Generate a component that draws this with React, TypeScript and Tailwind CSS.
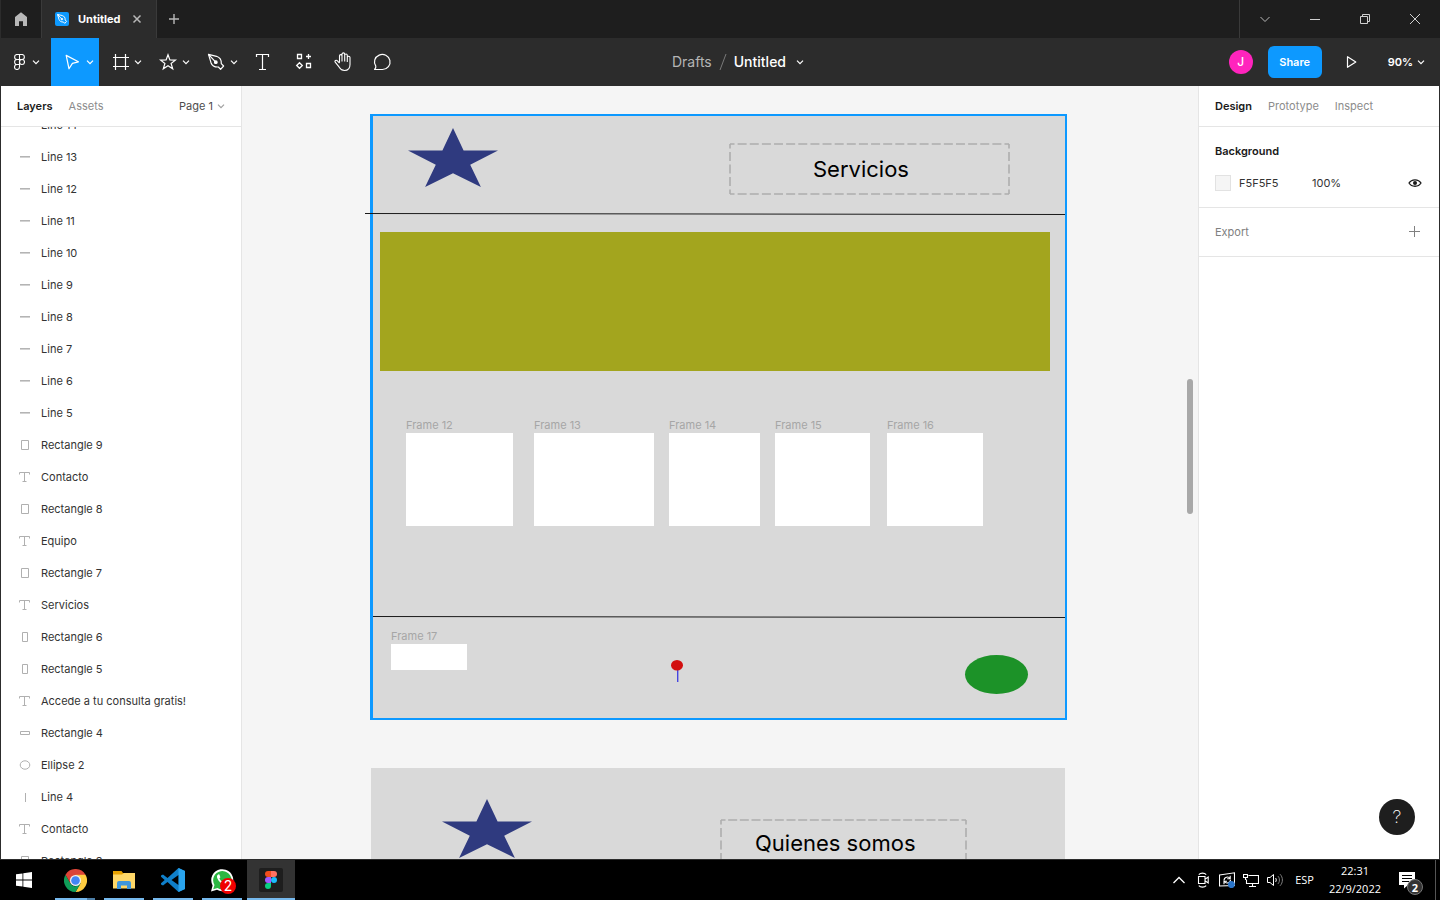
import React from "react";

type IconProps = { children: React.ReactNode; size?: string; box?: string; className?: string };

function Icon({ children, size = "size-6", box = "0 0 24 24", className = "" }: IconProps) {
  return (
    <svg viewBox={box} className={`${size} shrink-0 ${className}`} fill="none" stroke="currentColor" strokeWidth="1" aria-hidden="true">
      {children}
    </svg>
  );
}

function Chevron({ className = "" }: { className?: string }) {
  return (
    <Icon size="size-2" box="0 0 8 8" className={className}>
      <path d="M1 2.6 4 5.6 7 2.6" strokeWidth="1.2" />
    </Icon>
  );
}

const penPath = (
  <>
    <path d="M3.5 4.4 11.5 6.3C14.6 7.3 16.5 9.6 16.3 13.6L18.6 16 15.6 19.3 13.4 17C9.5 17.2 7 15.6 6 12.7Z" strokeLinejoin="round" />
    <path d="M3.7 4.6 10.2 11.6" />
    <circle cx="10.8" cy="12.2" r="1.3" fill="currentColor" />
  </>
);

function TitleBar() {
  return (
    <header className="flex h-[38px] shrink-0 bg-[#1e1e1e] text-[#b8b8b8]">
      <button aria-label="Home" className="flex w-10 items-center justify-center">
        <svg viewBox="0 0 14 14" className="size-3.5" fill="currentColor" aria-hidden="true">
          <path d="M7 0.3 13 5V14H9V9.2H5V14H1V5Z" />
        </svg>
      </button>
      <div className="flex w-[116px] items-center border-x border-[#3a3a3a] bg-[#2c2c2c] pl-[13px]">
        <span className="flex size-3.5 items-center justify-center rounded-[2px] bg-[#0d99ff] text-white">
          <Icon size="size-3" box="1 2 20 20">
            <g strokeWidth="1.6">{penPath}</g>
          </Icon>
        </span>
        <span className="ml-[9px] text-[11px] font-bold text-white">Untitled</span>
        <button aria-label="Close tab" className="ml-3">
          <Icon size="size-2.5" box="0 0 10 10">
            <path d="M1.5 1.5 8.5 8.5M8.5 1.5 1.5 8.5" strokeWidth="1.5" />
          </Icon>
        </button>
      </div>
      <button aria-label="New tab" className="flex w-[34px] items-center justify-center">
        <Icon size="size-2.5" box="0 0 10 10">
          <path d="M5 0V10M0 5H10" strokeWidth="1.4" />
        </Icon>
      </button>
      <div className="ml-auto flex border-l border-[#3a3a3a]">
        <button aria-label="Tabs menu" className="flex w-[50px] items-center justify-center">
          <Icon size="size-3" box="0 0 12 12">
            <path d="M1.5 4 6 8.5 10.5 4" />
          </Icon>
        </button>
        <button aria-label="Minimize" className="flex w-[50px] items-center justify-center text-[#d0d0d0]">
          <Icon size="size-3" box="0 0 12 12">
            <path d="M1 6.5H11" />
          </Icon>
        </button>
        <button aria-label="Restore" className="flex w-[50px] items-center justify-center text-[#d0d0d0]">
          <Icon size="size-3" box="0 0 12 12">
            <path d="M1.5 3.5H8.5V10.5H1.5ZM3.5 3.5V1.5H10.5V8.5H8.5" />
          </Icon>
        </button>
        <button aria-label="Close" className="flex w-[50px] items-center justify-center text-[#d0d0d0]">
          <Icon size="size-3" box="0 0 12 12">
            <path d="M1 1 11 11M11 1 1 11" />
          </Icon>
        </button>
      </div>
    </header>
  );
}

const menuTools = [
  {
    name: "Move",
    active: true,
    icon: <path d="M5.2 5.4 17.4 11.8 11.4 13.4 8 18.8Z" strokeLinejoin="round" strokeWidth="1.2" />,
  },
  { name: "Frame", active: false, icon: <path d="M6.5 4V20M16.5 4V20M4 7.5H20M4 16.5H20" strokeWidth="1.2" /> },
  {
    name: "Shape",
    active: false,
    icon: <path d="M11 4.8 12.9 9.9 18.4 10.1 14.1 13.5 15.7 18.8 11 15.7 6.3 18.8 7.9 13.5 3.6 10.1 9.1 9.9Z" strokeWidth="1.2" />,
  },
  { name: "Pen", active: false, icon: <g strokeWidth="1.2">{penPath}</g> },
];

const plainTools = [
  { name: "Text", icon: <path d="M5.5 7V4.5H17.5V7M11.5 4.5V19.5M8 19.5H15" strokeWidth="1.2" /> },
  {
    name: "Resources",
    icon: <path d="M6.5 4.5H10.5V8.5H6.5ZM15.5 13.5H19.5V17.5H15.5ZM17.5 4V9M15 6.5H20M8.5 12.7 11.3 15.5 8.5 18.3 5.7 15.5Z" strokeWidth="1.3" />,
  },
  {
    name: "Hand",
    icon: (
      <path
        d="M8.5 12.5V5.8C8.5 4.2 11 4.2 11 5.8V4.2C11 2.4 13.7 2.4 13.7 4.2V5.2C13.7 3.6 16.3 3.6 16.3 5.4V7.4C16.3 5.9 19 5.9 19 7.6V14.5C19 18.5 16.5 20.5 13.5 20.5 10.5 20.5 9.3 19 8.2 17.2L4.2 12.2C3.2 10.8 5.2 9.6 6.4 10.9L8.5 13.2M11 5.8V11.5M13.7 5V11.5M16.3 7V12"
        strokeWidth="1.1"
        strokeLinejoin="round"
      />
    ),
  },
  {
    name: "Comment",
    icon: <path d="M3.6 19.5H11.5A7.8 7.5 0 1 0 4.8 16.2C5 17.2 4.4 18.6 3.6 19.5Z" strokeWidth="1.2" strokeLinejoin="round" />,
  },
];

function Toolbar() {
  return (
    <div className="grid h-12 shrink-0 grid-cols-[1fr_auto_1fr] bg-[#2c2c2c] text-white">
      <nav className="flex" aria-label="Tools">
        <button aria-label="Main menu" className="flex w-[50px] items-center pl-[13px]">
          <Icon size="h-4 w-[11px]" box="0 0 11 16">
            <path d="M5.5.5H3A2.4 2.5 0 0 0 3 5.5H8A2.4 2.5 0 0 0 8 .5ZV13A2.5 2.5 0 1 1 3 10.5H5.5M5.5 5.5H3A2.4 2.5 0 0 0 3 10.5" strokeWidth="1.1" />
            <circle cx="8" cy="8" r="2.5" strokeWidth="1.1" />
          </Icon>
          <Chevron className="ml-[7px]" />
        </button>
        {menuTools.map((t) => (
          <button key={t.name} aria-label={t.name} className={`flex w-12 items-center pl-2.5 ${t.active ? "bg-[#0d99ff]" : ""}`}>
            <Icon>{t.icon}</Icon>
            <Chevron className="ml-px" />
          </button>
        ))}
        {plainTools.map((t) => (
          <button key={t.name} aria-label={t.name} className="flex w-10 items-center justify-center">
            <Icon>{t.icon}</Icon>
          </button>
        ))}
      </nav>
      <div className="flex items-center pl-9 text-sm">
        <a href="#drafts" className="text-[#b5b5b5]">Drafts</a>
        <Icon size="h-4 w-2" box="0 0 8 16" className="mx-[7px] text-[#7a7a7a]">
          <path d="M1 16 7 0" />
        </Icon>
        <button className="flex items-center font-medium">
          Untitled
          <Chevron className="ml-2.5" />
        </button>
      </div>
      <div className="flex items-center justify-end pr-3.5 text-[11px] font-semibold">
        <span className="flex size-6 items-center justify-center rounded-full bg-[#ff24bd] text-xs font-medium">J</span>
        <button className="ml-[15px] h-8 w-[54px] rounded-md bg-[#0d99ff]">Share</button>
        <button aria-label="Present" className="ml-[18px]">
          <Icon>
            <path d="M7.5 6.7V17.3L15.8 12Z" strokeWidth="1.2" strokeLinejoin="round" />
          </Icon>
        </button>
        <button className="ml-6 flex items-center">
          90%
          <Chevron className="ml-1" />
        </button>
      </div>
    </div>
  );
}

const layerIcons = {
  line: <path d="M2 6.8H12" strokeWidth="1.5" />,
  vline: <path d="M7.5 3V12" />,
  rect: <path d="M3.5 2.5H10.5V11.5H3.5Z" />,
  slim: <path d="M4.5 2.5H9.5V11.5H4.5Z" />,
  wide: <path d="M2.5 5.5H11.5V8.5H2.5Z" />,
  text: <path d="M1.5 4.5V2.5H11.5V4.5M6.5 2.5V11.5M4.5 11.5H8.5" />,
  ellipse: <ellipse cx="7" cy="7" rx="4.8" ry="4.2" />,
};

const layers: [keyof typeof layerIcons, string][] = [
  ["line", "Line 14"],
  ["line", "Line 13"],
  ["line", "Line 12"],
  ["line", "Line 11"],
  ["line", "Line 10"],
  ["line", "Line 9"],
  ["line", "Line 8"],
  ["line", "Line 7"],
  ["line", "Line 6"],
  ["line", "Line 5"],
  ["rect", "Rectangle 9"],
  ["text", "Contacto"],
  ["rect", "Rectangle 8"],
  ["text", "Equipo"],
  ["rect", "Rectangle 7"],
  ["text", "Servicios"],
  ["slim", "Rectangle 6"],
  ["slim", "Rectangle 5"],
  ["text", "Accede a tu consulta gratis!"],
  ["wide", "Rectangle 4"],
  ["ellipse", "Ellipse 2"],
  ["vline", "Line 4"],
  ["text", "Contacto"],
  ["rect", "Rectangle 3"],
];

function LayersPanel() {
  return (
    <aside className="flex w-[241px] shrink-0 flex-col border-r border-[#e5e5e5] bg-white text-[11px]">
      <div className="flex h-[41px] shrink-0 items-center gap-4 border-b border-[#e5e5e5] px-4">
        <button className="font-semibold text-[#1a1a1a]">Layers</button>
        <button className="text-[#8c8c8c]">Assets</button>
        <button className="ml-auto flex items-center gap-1 text-[#4d4d4d]">
          Page 1 <Chevron className="text-[#a0a0a0]" />
        </button>
      </div>
      <div className="min-h-0 flex-1 overflow-hidden">
        <ul className="-mt-[18px]">
          {layers.map(([kind, name], i) => (
            <li key={i} className="flex h-8 items-center gap-[9px] pl-[17px] text-[#333333]">
              <Icon size="size-3.5" box="0 0 14 14" className="text-[#b0b0b0]">
                {layerIcons[kind]}
              </Icon>
              {name}
            </li>
          ))}
        </ul>
      </div>
    </aside>
  );
}

function Star({ className }: { className: string }) {
  return (
    <svg viewBox="0 0 90 59" className={`absolute h-[59px] w-[90px] ${className}`} fill="#2f3a7f" aria-hidden="true">
      <path d="M45 0 55.6 22.5H90L62.2 36.7 72.9 59 45 45.3 17.1 59 27.8 36.7 0 22.5H34.4Z" />
    </svg>
  );
}

function DashedBox({ width, height, xPeriods, className }: { width: number; height: number; xPeriods: number; className: string }) {
  const px = width / xPeriods;
  const py = height / 4;
  return (
    <svg
      viewBox={`-1 -1 ${width + 2} ${height + 2}`}
      className={`absolute ${className}`}
      fill="none"
      stroke="#adadad"
      strokeWidth="1.6"
      aria-hidden="true"
    >
      <path d={`M0 0H${width}M0 ${height}H${width}`} strokeDasharray={`9 ${px - 9}`} strokeDashoffset="4.5" />
      <path d={`M0 0V${height}M${width} 0V${height}`} strokeDasharray={`9 ${py - 9}`} strokeDashoffset="4.5" />
    </svg>
  );
}

const frames = [
  { name: "Frame 12", place: "left-[164px] top-[330px]", size: "h-[93px] w-[107px]" },
  { name: "Frame 13", place: "left-[292px] top-[330px]", size: "h-[93px] w-[120px]" },
  { name: "Frame 14", place: "left-[427px] top-[330px]", size: "h-[93px] w-[91px]" },
  { name: "Frame 15", place: "left-[533px] top-[330px]", size: "h-[93px] w-[95px]" },
  { name: "Frame 16", place: "left-[645px] top-[330px]", size: "h-[93px] w-[96px]" },
  { name: "Frame 17", place: "left-[149px] top-[541px]", size: "h-[26px] w-[76px]" },
];

function Canvas() {
  return (
    <main className="relative min-w-0 flex-1 overflow-hidden bg-[#f5f5f5]">
      <div className="absolute left-[128px] top-[28px] h-[606px] w-[697px] border-2 border-l-[3px] border-[#0d99ff] bg-[#d9d9d9]" />
      <Star className="left-[166px] top-[42px]" />
      <DashedBox width={279} height={50} xPeriods={23} className="left-[487px] top-[57px] h-[52px] w-[281px]" />
      <p className="absolute left-[571px] top-[69px] text-[22px] leading-7 text-black">Servicios</p>
      <svg viewBox="0 0 702 4" className="absolute left-[123px] top-[126px] h-1 w-[702px]" stroke="#1a1a1a" aria-hidden="true">
        <path d="M0 1.5 700 2.5" />
      </svg>
      <div className="absolute left-[138px] top-[146px] h-[139px] w-[670px] bg-[#a3a51e]" />
      {frames.map((f) => (
        <section key={f.name} className={`absolute ${f.place}`}>
          <h2 className="h-[17px] text-[11px] leading-[18px] text-[#a6a6a6]">{f.name}</h2>
          <div className={`bg-white ${f.size}`} />
        </section>
      ))}
      <svg viewBox="0 0 692 4" className="absolute left-[131px] top-[529px] h-1 w-[692px]" stroke="#1a1a1a" aria-hidden="true">
        <path d="M0 1.5 692 2.5" />
      </svg>
      <svg viewBox="0 0 12 23" className="absolute left-[429px] top-[574px] h-[23px] w-3" aria-hidden="true">
        <path d="M6.7 8V22" stroke="#4646e0" strokeWidth="1.4" />
        <ellipse cx="6" cy="5.3" rx="6" ry="5.2" fill="#d20f0f" />
      </svg>
      <div className="absolute left-[723px] top-[569px] h-[39px] w-[63px] rounded-[50%] bg-[#1c9228]" />

      <div className="absolute left-[129px] top-[682px] h-[606px] w-[694px] bg-[#d9d9d9]" />
      <Star className="left-[200px] top-[713px]" />
      <DashedBox width={245} height={50} xPeriods={21} className="left-[478px] top-[733px] h-[52px] w-[247px]" />
      <p className="absolute left-[513px] top-[743px] whitespace-nowrap text-[22px] leading-7 text-black">Quienes somos</p>

      <div className="absolute right-[5px] top-[293px] h-[135px] w-1.5 rounded-full bg-[#a8a8a8]" />
    </main>
  );
}

function DesignPanel() {
  return (
    <aside className="relative w-[241px] shrink-0 border-l border-[#e5e5e5] bg-white text-[11px] text-[#333333]">
      <div className="flex h-[41px] items-center gap-4 border-b border-[#e5e5e5] px-4 text-[#8c8c8c]">
        <button className="font-semibold text-[#1a1a1a]">Design</button>
        <button>Prototype</button>
        <button>Inspect</button>
      </div>
      <section className="border-b border-[#e5e5e5] px-4 py-2">
        <h2 className="flex h-8 items-center font-semibold text-[#1a1a1a]">Background</h2>
        <div className="flex h-8 items-center">
          <button aria-label="Pick color" className="size-4 border border-[#e2e2e2] bg-[#f5f5f5]" />
          <input aria-label="Background color" defaultValue="F5F5F5" className="ml-2 w-[73px] outline-none" />
          <input aria-label="Opacity" defaultValue="100%" className="w-12 outline-none" />
          <button aria-label="Toggle visibility" className="ml-auto text-[#1a1a1a]">
            <Icon size="h-3.5 w-4" box="0 0 16 14">
              <path d="M2 7C4.6 2.7 11.4 2.7 14 7 11.4 11.3 4.6 11.3 2 7Z" strokeWidth="1.3" />
              <circle cx="8" cy="7" r="2" fill="currentColor" stroke="none" />
            </Icon>
          </button>
        </div>
      </section>
      <section className="flex h-[49px] items-center justify-between border-b border-[#e5e5e5] px-4 text-[#808080]">
        <h2>Export</h2>
        <button aria-label="Add export">
          <Icon size="size-4" box="0 0 16 16">
            <path d="M7.5 2V13M2 7.5H13" />
          </Icon>
        </button>
      </section>
      <button
        aria-label="Help"
        className="absolute bottom-6 right-6 flex size-9 items-center justify-center rounded-full bg-[#1e1e1e] text-lg font-extralight text-white"
      >
        ?
      </button>
    </aside>
  );
}

function TaskItem({ label, active, stacked, children }: { label: string; active?: boolean; stacked?: boolean; children: React.ReactNode }) {
  return (
    <button aria-label={label} className={`flex w-12 flex-col items-center ${active ? "bg-[#333333]" : ""}`}>
      <span className="flex flex-1 items-center pt-0.5">{children}</span>
      <span className={`flex h-0.5 justify-end bg-[#76b9ed] ${active ? "w-12" : "w-10"}`}>
        {stacked && <span className="w-2 bg-[#4d7fa8]" />}
      </span>
    </button>
  );
}

function Taskbar() {
  return (
    <footer className="flex h-10 shrink-0 bg-black text-white">
      <button aria-label="Start" className="mr-[3px] flex w-12 items-center justify-center">
        <svg viewBox="0 0 16 16" className="size-4" fill="#fff" aria-hidden="true">
          <path d="M0 2.3 6.5 1.4V7.6H0ZM7.3 1.3 16 0V7.6H7.3ZM0 8.4H6.5V14.6L0 13.7ZM7.3 8.4H16V16L7.3 14.7Z" />
        </svg>
      </button>
      <div className="flex gap-px">
        <TaskItem label="Chrome" stacked>
          <svg viewBox="0 0 24 24" className="size-[23px]" aria-hidden="true">
            <path d="M1.6 6A12 12 0 0 1 22.4 6L12 12Z" fill="#db4437" />
            <path d="M12 6H22.4A12 12 0 0 1 12 24L17.2 15Z" fill="#ffcd40" />
            <path d="M1.6 6 6.8 15C8 17 10 18 12 18L17.2 15 12 24A12 12 0 0 1 1.6 6Z" fill="#0f9d58" />
            <path d="M1.6 6H22.4L12 6.5 6.8 15Z" fill="#db4437" />
            <circle cx="12" cy="12" r="5.8" fill="#f1f1f1" />
            <circle cx="12" cy="12" r="4.5" fill="#4285f4" />
          </svg>
        </TaskItem>
        <TaskItem label="File Explorer">
          <svg viewBox="0 0 22 20" className="h-5 w-[22px]" aria-hidden="true">
            <path d="M0 1H8.5L10 3H21V8H0Z" fill="#e8a200" />
            <path d="M0 4.5H9L11 3H22V18.5H0Z" fill="#ffd868" />
            <path d="M4 19V13Q4 11 6 11H16Q18 11 18 13V19H14V15.5H8V19Z" fill="#3f97dd" />
          </svg>
        </TaskItem>
        <TaskItem label="Visual Studio Code">
          <svg viewBox="0 0 24 24" className="size-6" aria-hidden="true">
            <path d="M17.5 0 24 3V21L17.5 24 6.5 14 2 17.5 0 16.5V15.3L3.7 12 0 8.7V7.5L2 6.5 6.5 10ZM17.8 6.8 10.5 12 17.8 17.2Z" fill="#0f7fc9" fillRule="evenodd" />
            <path d="M17.5 0 24 3V21L17.5 24Z" fill="#2aa4ee" />
          </svg>
        </TaskItem>
        <TaskItem label="WhatsApp">
          <span className="relative block">
            <svg viewBox="0 0 24 24" className="size-6" aria-hidden="true">
              <path d="M1 23.5 2.6 17.4A11 11 0 1 1 7 21.8Z" fill="#fff" />
              <path d="M3.2 21.2 4.5 17A9.2 9.2 0 1 1 7.5 20Z" fill="#2cb742" />
              <path d="M8.6 6.2C7 6.8 6.6 8.6 7.3 10.2 8.6 13.3 11 15.6 14.2 16.6 15.8 17.1 17.4 16.3 17.6 14.6L14.9 13.2 13.7 14.6C11.7 13.8 10.3 12.4 9.4 10.6L10.4 9.3 9.4 6.4Z" fill="#fff" />
            </svg>
            <span className="absolute -bottom-0.5 -right-0.5 flex size-4 items-center justify-center rounded-full bg-[#f00000] text-sm leading-4">2</span>
          </span>
        </TaskItem>
        <TaskItem label="Figma" active>
          <span className="flex size-6 items-center justify-center rounded-[2px] bg-[#1e1e1e]">
            <svg viewBox="0 0 12 18" className="h-[18px] w-3" aria-hidden="true">
              <path d="M6 0H3A3 3 0 0 0 3 6H6Z" fill="#f24e1e" />
              <path d="M6 0H9A3 3 0 0 1 9 6H6Z" fill="#ff7262" />
              <path d="M6 6H3A3 3 0 0 0 3 12H6Z" fill="#a259ff" />
              <circle cx="9" cy="9" r="3" fill="#1abcfe" />
              <path d="M6 12H3A3 3 0 1 0 6 15Z" fill="#0acf83" />
            </svg>
          </span>
        </TaskItem>
      </div>
      <div className="ml-auto flex items-center font-['Open_Sans',sans-serif] text-[11px]">
        <div className="flex gap-2">
          <Icon size="size-4" box="0 0 16 16">
            <path d="M2.5 11 8 5.5 13.5 11" strokeWidth="1.3" />
          </Icon>
          <Icon size="size-4" box="0 0 16 16">
            <path d="M3.5 4.5H10V11.5H3.5ZM10 7.2 13.2 5V11L10 8.8M3.8 2.6C5.5.6 9.5.6 11.2 2.6M3.8 13.6C5.5 15.6 9.5 15.6 11.2 13.6" strokeWidth="1.1" />
          </Icon>
          <Icon size="size-4" box="0 0 16 16">
            <path d="M.5 3 15.5.8V13.5L.5 14ZM5 8.5C5 4.8 9.5 4 11 6.5M11.2 3.8V6.8H8.2M11.5 7.8C11.5 11.3 7 12 5.3 9.5M5 12.2V9.3H8" strokeWidth="1.1" />
            <circle cx="12.4" cy="12.6" r="3.5" fill="#2a74c8" stroke="none" />
          </Icon>
          <Icon size="size-4" box="0 0 16 16">
            <path d="M5.5 3.5H15.5V11.5H3.5V7.5M9.5 11.5V14.5M6 14.5H13M.5 2.5H4.5V5.5H.5ZM2.5 5.5V8" strokeWidth="1.1" />
          </Icon>
          <Icon size="size-4" box="0 0 16 16">
            <path d="M.5 5.5H3L6.5 2.5V13.5L3 10.5H.5ZM8.5 6C9.5 7 9.5 9 8.5 10" />
            <path d="M10.8 4C13 6 13 10 10.8 12M13 2.2C16.2 5.3 16.2 10.7 13 13.8" stroke="#808080" />
          </Icon>
        </div>
        <span className="ml-3">ESP</span>
        <div className="ml-[15px] text-center leading-[18px]">
          <div>22:31</div>
          <div>22/9/2022</div>
        </div>
        <button aria-label="Notifications" className="relative ml-[18px] size-5">
          <svg viewBox="0 0 20 20" className="size-5" aria-hidden="true">
            <path d="M0 2H16V15H9L5 18.5V15H0Z" fill="#fff" />
            <path d="M3 5.5H13M3 8.5H13M3 11.5H10" stroke="#000" />
          </svg>
          <span className="absolute -bottom-[5px] -right-1 flex size-4 items-center justify-center rounded-full border border-[#777777] bg-[#333333] text-[11px] font-bold leading-none">
            2
          </span>
        </button>
        <div className="ml-4 h-full w-[5px] border-l border-[#555555]" />
      </div>
    </footer>
  );
}

export default function App() {
  return (
    <div className="flex h-screen flex-col overflow-hidden bg-black font-[Inter,sans-serif]">
      <div className="flex min-h-0 flex-1 flex-col border-b border-l border-[#2c2c2c]">
        <TitleBar />
        <div className="flex min-h-0 flex-1 flex-col border-r border-[#2c2c2c]">
          <Toolbar />
          <div className="flex min-h-0 flex-1">
            <LayersPanel />
            <Canvas />
            <DesignPanel />
          </div>
        </div>
      </div>
      <Taskbar />
    </div>
  );
}
